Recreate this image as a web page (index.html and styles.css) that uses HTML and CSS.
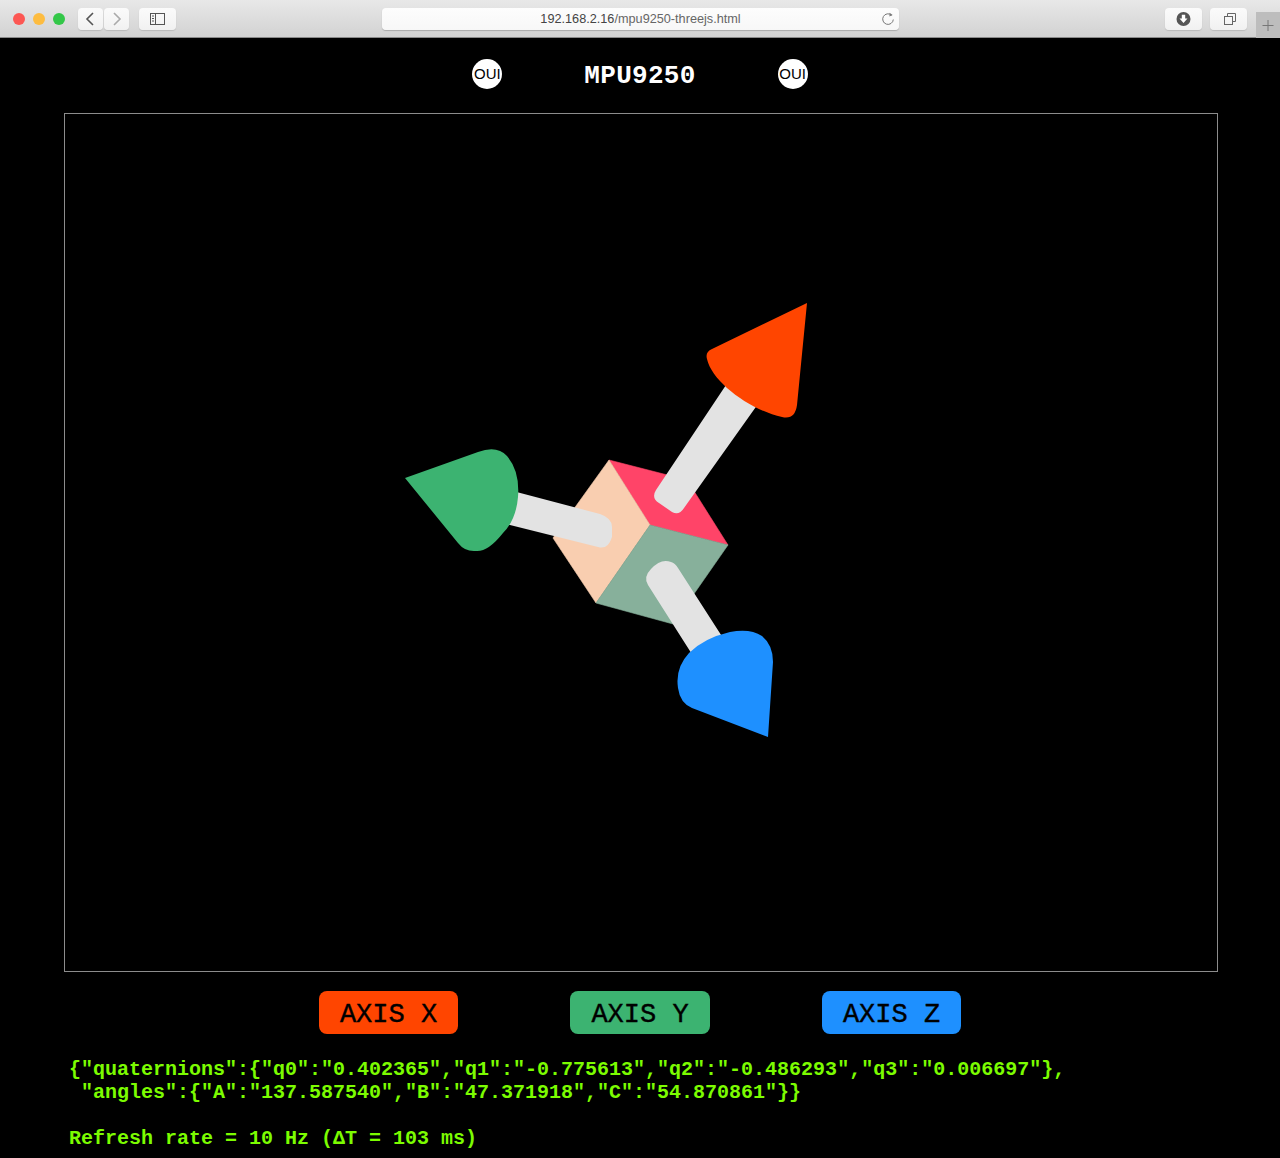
FILE: index.html
```html
<!DOCTYPE html>
<html lang="en">
<head>
    <meta charset="UTF-8">
    <title>MPU9250</title>
    <link rel="stylesheet" href="styles.css">
</head>
<body>
    <div class="toolbar">
        <div class="lights">
            <span class="light red"></span>
            <span class="light yellow"></span>
            <span class="light green"></span>
        </div>
        <div class="nav">
            <div class="tool small">
                <svg width="25" height="22" viewBox="0 0 25 22"><path d="M15 5 L9 11 L15 17" fill="none" stroke="#555" stroke-width="1.6"/></svg>
            </div>
            <div class="tool small">
                <svg width="25" height="22" viewBox="0 0 25 22"><path d="M10 5 L16 11 L10 17" fill="none" stroke="#aaa" stroke-width="1.6"/></svg>
            </div>
        </div>
        <div class="tool sidebar-btn">
            <svg width="37" height="22" viewBox="0 0 37 22">
                <rect x="11.5" y="5.5" width="14" height="11" fill="none" stroke="#555"/>
                <path d="M16.5 5.5 V16.5 M13 8 H15 M13 10.5 H15 M13 13 H15" fill="none" stroke="#555"/>
            </svg>
        </div>
        <div class="url">
            <span class="url-text"><b>192.168.2.16</b>/mpu9250-threejs.html</span>
            <svg class="reload" width="14" height="14" viewBox="0 0 14 14">
                <path d="M10.6 3.2 A5.3 5.3 0 1 0 12.3 7.5" fill="none" stroke="#777"/>
                <path d="M8.6 0.8 L11.6 3.1 L8.4 4.6 Z" fill="#777"/>
            </svg>
        </div>
        <div class="tool right-btn">
            <svg width="37" height="22" viewBox="0 0 37 22">
                <circle cx="18.5" cy="11" r="7" fill="#555"/>
                <path d="M16.8 6.8 H20.2 V10.5 H22.5 L18.5 15 L14.5 10.5 H16.8 Z" fill="#fff"/>
            </svg>
        </div>
        <div class="tool right-btn tabs-btn">
            <svg width="37" height="22" viewBox="0 0 37 22">
                <rect x="14.5" y="8.5" width="8" height="8" fill="none" stroke="#666"/>
                <path d="M17.5 8.5 V5.5 H25.5 V13.5 H22.5" fill="none" stroke="#666"/>
            </svg>
        </div>
        <div class="new-tab">
            <svg width="24" height="26" viewBox="0 0 24 26"><path d="M12 8 V19 M6.5 13.5 H17.5" stroke="#777"/></svg>
        </div>
    </div>

    <div class="header">
        <span class="badge">OUI</span>
        <h1>MPU9250</h1>
        <span class="badge">OUI</span>
    </div>

    <div class="scene">
        <svg width="1152" height="857" viewBox="65 114 1152 857">
            <!-- cube -->
            <path d="M609 460 L687 480 L728 545 L650 525 Z" fill="#ff4468" stroke="#ff4468" stroke-width="0.6"/>
            <path d="M609 460 L650 525 L596 603 L553 538 Z" fill="#f9ceb0" stroke="#f9ceb0" stroke-width="0.6"/>
            <path d="M650 525 L728 545 L673 624 L596 603 Z" fill="#87b09b" stroke="#87b09b" stroke-width="0.6"/>
            <!-- bars -->
            <path d="M738 367 L656 490 Q651 498 659 503 L672 512 Q679 516 684 508 L768 390 Z" fill="#e3e3e3"/>
            <path d="M505 489 L600 514 Q612 518 612 527 L612 537 Q608 550 598 547 L498 522 Z" fill="#e3e3e3"/>
            <path d="M648 585 Q643 577 651 569 Q661 558 671 562 Q675 563 678 568 L732 652 L702 670 Z" fill="#e3e3e3"/>
            <!-- cones -->
            <path d="M807 303 L712 349 Q705 352 707 359 C712 382 750 410 782 417 Q795 420 797 405 Z" fill="#ff4500"/>
            <path d="M405 478 L478 452 Q497 445 507 456 Q520 471 518 497 Q516 520 503 533 Q488 552 476 551 Q465 552 458 543 Z" fill="#3cb371"/>
            <path d="M768 737 L773 662 Q773 645 762 636 Q750 628 730 632 Q704 638 689 653 Q675 668 678 688 Q680 703 692 708 Z" fill="#1e90ff"/>
        </svg>
    </div>

    <div class="controls">
        <button class="axis axis-x">AXIS X</button>
        <button class="axis axis-y">AXIS Y</button>
        <button class="axis axis-z">AXIS Z</button>
    </div>

    <pre class="readout">{"quaternions":{"q0":"0.402365","q1":"-0.775613","q2":"-0.486293","q3":"0.006697"},
 "angles":{"A":"137.587540","B":"47.371918","C":"54.870861"}}

Refresh rate = 10 Hz (ΔT = 103 ms)</pre>
</body>
</html>
```
FILE: styles.css
```css
html, body {
    height: 1158px;
    overflow: hidden;
}
body {
    margin: 0;
    background-color: #000;
}
.toolbar {
    display: flex;
    align-items: flex-start;
    box-sizing: border-box;
    height: 38px;
    padding-top: 8px;
    background: linear-gradient(#e8e8e8, #d2d2d2);
    border-bottom: 1px solid #8a8a8a;
}
.lights {
    display: flex;
    gap: 8px;
    margin-left: 13px;
    margin-top: 5px;
}
.light {
    width: 12px;
    height: 12px;
    border-radius: 50%;
}
.red { background-color: #fc5753; }
.yellow { background-color: #fdbc40; }
.green { background-color: #33c748; }
.nav {
    display: flex;
    gap: 1px;
    margin-left: 13px;
}
.tool {
    height: 22px;
    background: linear-gradient(#fbfbfb, #f1f1f1);
    border-radius: 4px;
    box-shadow: 0 1px 1px #bbb;
}
.tool svg {
    display: block;
}
.small { width: 25px; }
.sidebar-btn {
    width: 37px;
    margin-left: 10px;
}
.url {
    display: flex;
    justify-content: center;
    align-items: center;
    position: relative;
    width: 517px;
    height: 22px;
    margin-left: 206px;
    background: linear-gradient(#fdfdfd, #f7f7f7);
    border-radius: 4px;
    box-shadow: 0 1px 1px #aaa;
}
.url-text {
    font-family: "Liberation Sans", sans-serif;
    font-size: 12.7px;
    color: #666;
}
.url-text b {
    font-weight: normal;
    color: #444;
}
.reload {
    position: absolute;
    right: 4px;
    top: 4px;
}
.right-btn {
    width: 37px;
    margin-left: 266px;
}
.tabs-btn {
    margin-left: 8px;
}
.new-tab {
    width: 24px;
    height: 26px;
    margin-left: 9px;
    margin-top: 4px;
    background-color: #bdbdbd;
}
.new-tab svg {
    display: block;
}
.header {
    display: flex;
    justify-content: center;
    align-items: center;
    gap: 82px;
    height: 72px;
    padding-bottom: 3px;
}
.header h1 {
    margin: 0;
    padding-top: 4px;
    font-family: "Liberation Mono", monospace;
    font-size: 26px;
    font-weight: 700;
    letter-spacing: 0.3px;
    color: #fff;
}
.badge {
    display: flex;
    justify-content: center;
    align-items: center;
    box-sizing: border-box;
    width: 30px;
    height: 30px;
    padding-bottom: 2px;
    border-radius: 50%;
    background-color: #fff;
    color: #000;
    font-family: "Liberation Sans", sans-serif;
    font-size: 15px;
}
.scene {
    width: 1152px;
    height: 857px;
    margin-left: 64px;
    border: 1px solid #8c8c8c;
}
.scene svg {
    display: block;
}
.controls {
    display: flex;
    justify-content: center;
    gap: 112px;
    margin-top: 19px;
}
.axis {
    width: 139px;
    height: 43px;
    padding: 4px 0 0;
    border: none;
    border-radius: 8px;
    color: #000;
    font-family: "Liberation Mono", monospace;
    font-size: 27px;
    -webkit-text-stroke: 0.4px #000;
}
.axis-x { background-color: #ff4500; }
.axis-y { background-color: #3cb371; width: 140px; }
.axis-z { background-color: #1e90ff; }
.readout {
    margin: 24px 0 0 69px;
    color: #7cfc00;
    font-family: "Liberation Mono", monospace;
    font-size: 20px;
    font-weight: 700;
    line-height: 23px;
}
```
